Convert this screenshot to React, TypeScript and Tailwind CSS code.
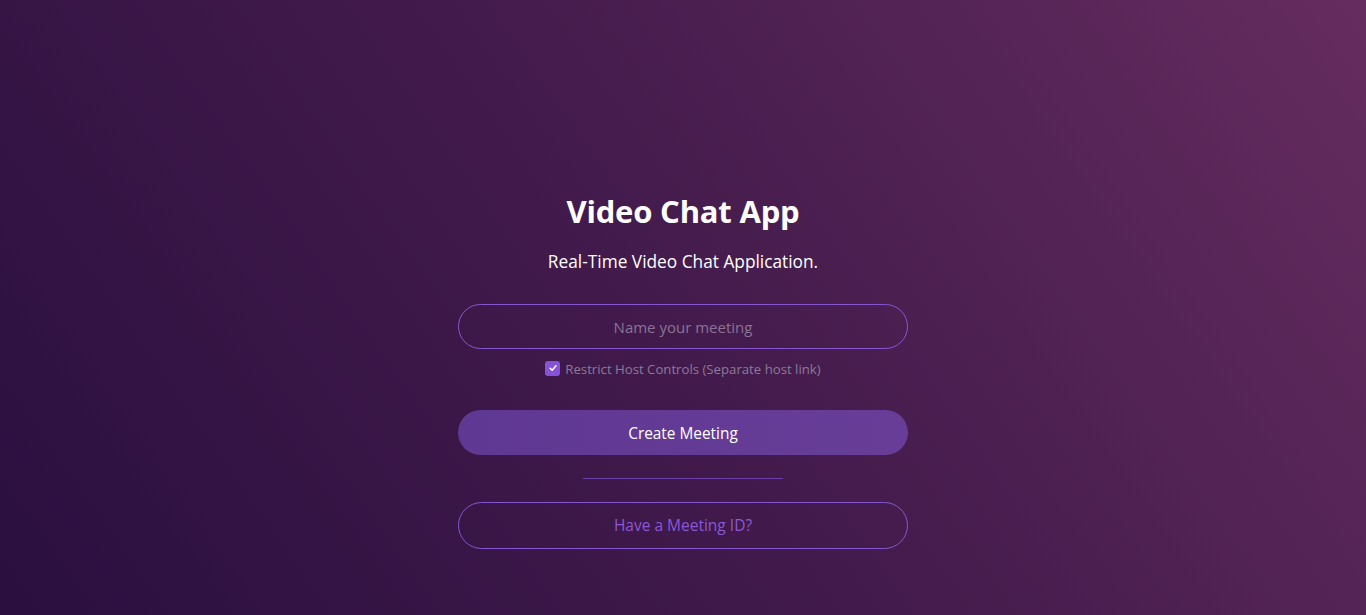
import { useState } from "react";

export default function App() {
  const [name, setName] = useState("");
  const [restrict, setRestrict] = useState(true);

  return (
    <div
      className="flex h-[615px] w-full items-center justify-center bg-[linear-gradient(55deg,#2a0f3f_0%,#431b4c_50%,#652c5f_100%)] text-white"
      style={{ fontFamily: '"Open Sans", "Noto Sans", sans-serif' }}
    >
      <div className="flex w-[450px] flex-col items-center pt-[124px]">
        <h1 className="text-[31px] font-bold leading-[40px] tracking-[-0.2px]">Video Chat App</h1>
        <p className="mt-[19px] text-[17.3px] leading-[24px]">Real-Time Video Chat Application.</p>

        <input
          value={name}
          onChange={(e) => setName(e.target.value)}
          placeholder="Name your meeting"
          className="mt-[30px] h-[45px] w-full rounded-full border border-[#8556cf] bg-transparent px-6 pt-[2px] text-center text-[15px] text-white outline-none placeholder:text-[#8b7394]"
        />

        <label className="mt-[11px] flex items-center gap-[5px] text-[13.2px] leading-[15px] text-[#8c7a97]">
          <button
            type="button"
            onClick={() => setRestrict(!restrict)}
            className="flex h-[15px] w-[15px] items-center justify-center rounded-[3px] bg-[#8552d8]"
          >
            {restrict && (
              <svg viewBox="0 0 12 12" className="h-[10px] w-[10px]" fill="none">
                <path d="M2.5 6.3 L5 8.6 L9.6 3.4" stroke="white" strokeWidth="1.8" strokeLinecap="round" strokeLinejoin="round" />
              </svg>
            )}
          </button>
          <span className="pt-[2px]">Restrict Host Controls (Separate host link)</span>
        </label>

        <button
          type="button"
          className="mt-[33px] h-[45px] w-full rounded-full bg-linear-to-r from-[#5f3893] to-[#673d97] pt-[3px] text-[15.4px] text-white"
        >
          Create Meeting
        </button>

        <div className="mt-[23px] h-px w-[200px] bg-[#6a3fa8]" />

        <button
          type="button"
          className="mt-[23px] h-[47px] w-full rounded-full border border-[#8556cf] pt-[2px] text-[15.5px] text-[#8b57d6]"
        >
          Have a Meeting ID?
        </button>
      </div>
    </div>
  );
}
